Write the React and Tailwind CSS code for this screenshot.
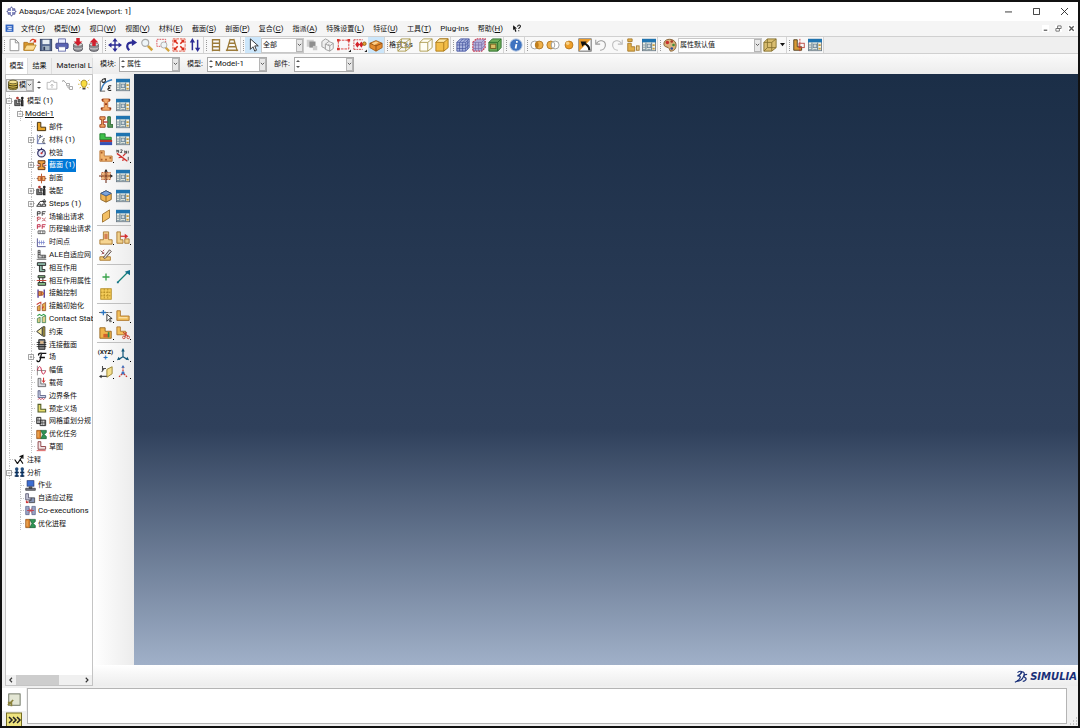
import React, { useState } from 'react';

const gold = '#e3b04a';
const dark = '#4a3a1a';

// All drawings share a 16x16 grid
const icons = {
    app: <><path d="M8 1l2 3h3v3l2 1-2 1v3h-3l-2 3-2-3H3V9L1 8l2-1V4h3z" fill="#8a8fc4" stroke="#4b4f8f" /><path d="M3 8h10M8 3v10" stroke="#fff" strokeWidth="1.5" /></>,
    doc: <><rect x="1" y="1" width="14" height="13" fill="#2f62c0" /><path d="M4 5h8M6 8h6M4 11h8" stroke="#fff" strokeWidth="1.6" /></>,
    fresh: <path d="M3.5 1.5h6l4 4v9h-10zM9.5 1.5v4h4" fill="#fff" stroke="#888" />,
    open: <><path d="M1 14V5h4l1 1h6v8z" fill="#d9972c" stroke="#a86d18" /><path d="M1 14l3-6h11l-3 6z" fill="#fbdc94" stroke="#b78428" /><path d="M8 4c2-3 4-3 6-1" fill="none" stroke="#d93a22" strokeWidth="1.5" /><path d="M15 1v4h-4z" fill="#d93a22" /></>,
    save: <><rect x="1.5" y="1.5" width="13" height="13" fill="#52668f" stroke="#2f3c5c" /><rect x="4" y="2" width="8" height="5" fill="#e7eef4" /><rect x="4" y="9" width="8" height="5" fill="#a3b4c3" /><path d="M6 10v4" stroke="#2f3c5c" strokeWidth="2" /></>,
    print: <><path d="M4 6V1h8v5" fill="#e9ecff" stroke="#6068a8" /><rect x="1" y="6" width="14" height="6" rx="1" fill="#5a63b4" stroke="#373e80" /><rect x="4" y="10" width="8" height="5" fill="#fff" stroke="#6068a8" /></>,
    dbDown: <><path d="M3 7v6c0 3 10 3 10 0V7z" fill="#8d8d93" stroke="#55555c" /><ellipse cx="8" cy="7.500" rx="5" ry="2" fill="#d6d6d6" stroke="#777" /><path d="M3 11c1 2 9 2 10 0" fill="none" stroke="#ddd" /><path d="M6 0h4v4h3L8 9 3 4h3z" fill="#cf1f2d" /></>,
    dbUp: <><path d="M3 7v6c0 3 10 3 10 0V7z" fill="#8d8d93" stroke="#55555c" /><ellipse cx="8" cy="7.500" rx="5" ry="2" fill="#d6d6d6" stroke="#777" /><path d="M3 11c1 2 9 2 10 0" fill="none" stroke="#ddd" /><path d="M6 9h4V5h3L8 0 3 5h3z" fill="#cf1f2d" /></>,
    pan: <><path d="M8 2v12M2 8h12" stroke="#2c2c94" strokeWidth="1.6" /><path d="M8 0l3 4H5zM8 16l3-4H5zM0 8l4-3v6zM16 8l-4-3v6z" fill="#2c2c94" /></>,
    spin: <><path d="M6 14C2 10 3 5 10 5" fill="none" stroke="#2c2c94" strokeWidth="2.4" /><path d="M9 1l6 4-6 4z" fill="#2c2c94" /></>,
    zoom: <><path d="M9 9l5 5" stroke="#d1a33c" strokeWidth="3" /><circle cx="6" cy="5.500" r="4" fill="#eef5f8" stroke="#a8a8a8" strokeWidth="1.3" /></>,
    zoomBox: <><rect x="1" y="1.500" width="10" height="8" fill="none" stroke="#d8434b" strokeDasharray="2 1" /><path d="M11 11l4 4" stroke="#d1a33c" strokeWidth="2.500" /><circle cx="9" cy="8" r="3.500" fill="#eef5f8" stroke="#a8a8a8" /></>,
    fit: <><rect x="1" y="1" width="14" height="14" fill="#fff6f3" stroke="#e04b38" strokeDasharray="3 1" /><path d="M3 3l3.500 3.500M13 3L9.500 6.500M3 13l3.500-3.500M13 13L9.500 9.500" stroke="#d92d1b" strokeWidth="1.700" /><path d="M2 2h4L2 6zM14 2h-4l4 4zM2 14h4l-4-4zM14 14h-4l4-4z" fill="#d92d1b" /></>,
    upDown: <><path d="M5 3v11M11 2v11" stroke="#2c2c94" strokeWidth="1.700" /><path d="M5 0l3 5H2zM11 16l3-5H8z" fill="#2c2c94" /></>,
    ladder: <path d="M4 1v14M12 1v14M4 2h8M4 6h8M4 10h8M4 14h8" fill="none" stroke="#9c7b3a" strokeWidth="1.500" />,
    persp: <path d="M6 1L2 15M10 1l4 14M5 2h6M4 6h8M3 10h10M1 14h14" fill="none" stroke="#9c7b3a" strokeWidth="1.500" />,
    cursor: <path d="M5 1v12l3-3 2 5 2-1-2-5h4z" fill="#fff" stroke="#222" />,
    squares: <><rect x="2" y="2" width="8" height="8" fill="#d0d0d0" /><rect x="5" y="4" width="7" height="7" fill="#8e8e8e" /><rect x="9" y="9" width="5" height="5" fill="#ccc" /></>,
    stack: <><path d="M1 4l4-3 4 2v6l-4 3-4-2z" fill="#eee" stroke="#999" /><path d="M5 7l4-3 5 2v6l-4 3-5-2zM5 7l5 2 4-3M10 9v6" fill="#f4f4f4" stroke="#999" /></>,
    pickBox: <><rect x="1.500" y="2.500" width="12" height="10" fill="none" stroke="#d8342f" strokeDasharray="3 1" /><path d="M0 1h3v3H0zM12 1h3v3h-3zM0 11h3v3H0z" fill="#d8342f" /><path d="M13 16h3v-3z" fill="#222" /></>,
    pickItems: <><path d="M1 2h10M1 13h10M1 2v11" fill="none" stroke="#c33" strokeDasharray="2 1" /><path d="M5 4l2.500 3.500L5 11 2.500 7.500zM9.500 4L12 7.500 9.500 11 7 7.500z" fill="#d3222a" /><circle cx="13" cy="6.500" r="2" fill="#e8a534" stroke="#8a5a1a" /><path d="M13 16h3v-3z" fill="#222" /></>,
    solid: <><path d="M1 6l7-3 7 3v5l-7 4-7-4z" fill="#e48b2e" stroke="#a35e17" /><path d="M1 6l7 3 7-3M8 9v6" fill="none" stroke="#8c4d12" /><path d="M3 6l5-2 3 1-5 3z" fill="#fbd08b" /></>,
    wire: <path d="M1 5h9v10H1zM1 5l4-4h10l-5 4M15 1v10l-5 4M5 1v10h10M1 15l4-4" fill="none" stroke="#a9984a" />,
    hidden: <path d="M1 5h9v10H1zM1 5l4-4h10l-5 4M15 1v10l-5 4" fill="#fffef4" stroke="#a9984a" />,
    shaded: <><path d="M1 5l4-4h10v10l-5 4H1z" fill="#f2bd48" stroke="#a97818" /><path d="M10 5h-9l4-4h10z" fill="#fde7a6" stroke="#a97818" /><path d="M10 5v10" stroke="#a97818" /></>,
    meshBlue: <><path d="M1 5l4-4h10v10l-4 4H1z" fill="#a9b4de" stroke="#4453a0" /><path d="M1 5h10v10M11 5l4-4M4 5v10M7.500 5v10M1 8h10l4-4M1 12h10l4-4M4 5l4-4M8 5l4-4M13 3v10" fill="none" stroke="#4858a0" strokeWidth=".8" /></>,
    meshRed: <><path d="M1 5l4-4h10v10l-4 4H1z" fill="#b5b2dc" stroke="#d04355" strokeWidth="1.500" strokeDasharray="2 1" /><path d="M1 5h10v10M11 5l4-4M4 5v10M7.500 5v10M1 8h10l4-4M1 12h10l4-4" fill="none" stroke="#7c6fa8" strokeWidth=".8" /></>,
    meshGreen: <><path d="M1 5l4-4h10v10l-4 4H1z" fill="#6fae5a" stroke="#2a6a2a" /><path d="M1 5h10v10M11 5l4-4" fill="none" stroke="#2a6a2a" /><rect x="3" y="7" width="6" height="5" fill="#d9bf66" stroke="#735a1a" /></>,
    info: <><circle cx="8" cy="8" r="7" fill="#3f73c0" stroke="#a9bedc" /><path d="M9 3.500v2M8.500 7l-1 5" stroke="#fff" strokeWidth="2" /></>,
    ring1: <><circle cx="5.500" cy="8" r="4.500" fill="#fff" stroke="#999" /><circle cx="10.500" cy="8" r="4.500" fill="#f0b04a" stroke="#aa7424" /><path d="M8 4a5 5 0 010 8 5 5 0 010-8" fill="#c17e1c" /></>,
    ring2: <><circle cx="5.500" cy="8" r="4.500" fill="#f0b04a" stroke="#aa7424" /><circle cx="10.500" cy="8" r="4.500" fill="#fff" stroke="#999" /><path d="M8 4a5 5 0 010 8 5 5 0 010-8" fill="#fff" stroke="#999" /></>,
    ring3: <><circle cx="8" cy="8" r="4.500" fill="#ee9f2a" stroke="#b4741b" /><circle cx="6.500" cy="6" r="2" fill="#f9d389" /></>,
    swap: <><rect x="1" y="1" width="14" height="14" fill="#fff" stroke="#555" /><path d="M1 1h14L1 15z" fill="#e89a2c" /><path d="M13 14c0-5-3-7-7-8" fill="none" stroke="#111" strokeWidth="2.500" /><path d="M3 4h7l-5 6z" fill="#111" /></>,
    undo: <path d="M3 6c3-5 10-3 10 2 0 4-3 6-6 6M2 2v5h5" fill="none" stroke="#999" strokeWidth="1.200" />,
    redo: <path d="M13 6C10 1 3 3 3 8c0 4 3 6 6 6M14 2v5H9" fill="none" stroke="#bbb" strokeWidth="1.200" />,
    parts: <><path d="M2 1h5v3H2zM2 6h4v4h4v5H2z" fill={gold} stroke="#a3782c" /><rect x="12" y="9" width="3" height="5" fill="#e9cf93" stroke="#a3782c" /></>,
    table: <><rect x="0.500" y="1.500" width="15" height="13" fill="#f2f3e6" stroke="#6b7a86" /><rect x="0" y="1" width="16" height="4" fill="#1f74b0" /><path d="M1 8h3M1 10.500h3M1 13h3M6 13h4" stroke="#6d8798" /><rect x="6" y="7" width="4" height="4" fill="#cfd8dc" stroke="#6d8798" /><path d="M4.500 5v9M11 5v9" stroke="#6b8799" strokeWidth="1.300" /><path d="M12 7h2.500v2H12zM12 11h2.500v2H12z" fill="#c79a3a" /></>,
    palette: <><path d="M1 7c0-8 14-7 14 1 0 5-3 7-6 7-2 0-1-3-3-4S1 10 1 7z" fill="#d9b27c" stroke="#7c5527" /><circle cx="5" cy="5" r="2" fill="#c9302c" /><circle cx="10" cy="4" r="1.500" fill="#a53a28" /><circle cx="12" cy="8" r="1.500" fill="#3c8c3c" /><circle cx="10" cy="12" r="1.500" fill="#2b4a9b" /></>,
    crate: <><path d="M1 5l4-4h10v10l-5 4H1z" fill="#d9bd70" /><path d="M1 5h9v10H1zM1 5l4-4h10l-5 4M15 1v10l-5 4M5 1v10h10M1 15l4-4" fill="none" stroke="#85702f" /></>,
    partCut: <><path d="M2 2h4v8h5v4H2z" fill="#d99b35" stroke={dark} /><rect x="8" y="6" width="6" height="5" fill="none" stroke="#b8433a" /><path d="M9 1v14" stroke="#c9302c" strokeDasharray="2 1" /></>,
    db: <><path d="M2 4v8c0 3 12 3 12 0V4" fill="#d9bd4f" stroke="#4a4212" /><ellipse cx="8" cy="4" rx="6" ry="2.500" fill="#f3e08f" stroke="#4a4212" /><path d="M2 7c0 3 12 3 12 0M2 10c0 3 12 3 12 0" fill="none" stroke="#4a4212" strokeWidth="1.500" /></>,
    upFolder: <path d="M1.500 4.500h4l1-2h4v2h4v9h-13zM8 12V7M6 9l2-2 2 2" fill="none" stroke="#aaa" />,
    tree2: <path d="M2 2l4 4M3 2H1v2M6 6h4v3H6zM8 9v3h2M10 10h4v4h-4z" fill="none" stroke="#aaa" strokeWidth="1.300" />,
    bulb: <><path d="M4 6c0-6 8-6 8 0 0 3-2 3-2 5H6c0-2-2-2-2-5z" fill="#f9dc3f" stroke="#8d7210" /><path d="M6 12h4v2H6z" fill="#444" /><path d="M1 1l2 2M15 1l-2 2M0 7h2M14 7h2M2 12l2-1M14 12l-2-1" stroke="#c7a31d" /></>,
    modelSet: <><path d="M1 14V6h3v5h5v3zM6 9V5h3v4z" fill="#777" stroke="#222" /><path d="M11 14V7l1-3 1 3v7z" fill="#555" stroke="#222" strokeWidth="1.500" /><circle cx="5" cy="3" r="2" fill="#b43a32" /><circle cx="12" cy="3" r="2" fill="#222" /></>,
    part: <path d="M2 2h5v7h7v5H2z" fill="#e7a428" stroke="#4a3410" strokeWidth="1.400" />,
    material: <><path d="M2 1v13h12M2 14C4 8 5 4 10 3" fill="none" stroke="#6573aa" strokeWidth="1.300" /><path d="M13 7c-4-1-3 3-1 3-4 0-3 4 1 3M7 2C3 2 4 6 6 5s1-3 0-3" fill="none" stroke="#333" strokeWidth="1.200" /></>,
    gauge: <><circle cx="8" cy="9" r="5.500" fill="#e9e9f9" stroke="#353568" strokeWidth="1.800" /><path d="M8 9l3-4M2 3l3 2M8 1v3" stroke="#353568" strokeWidth="1.500" /><circle cx="8" cy="9" r="1.500" fill="#d33" /></>,
    section: <><path d="M3 1h10v4h-3v5h3v4H3v-4h3V5H3z" fill="#f0a040" stroke="#5b2f12" strokeWidth="1.300" /><path d="M1 7.500h4M11 7.500h4" stroke="#c33c25" strokeWidth="1.500" /></>,
    profile: <><path d="M1 8h14" stroke="#333" /><path d="M3 5h4v6H3zM9 5h4v6H9zM8 1v14" fill="#f2b36a" stroke="#b34d20" strokeWidth="1.300" /></>,
    steps: <path d="M1 12l5-7h8M1 12h6v-3H3M7 12h2M10 4l2-2 2 3-2 3zM9 9h5v3H9z" fill="none" stroke="#222" strokeWidth="1.300" />,
    fieldOut: <><path d="M2 1v6M2 1h4v3H2M9 1v6M9 1h5M9 4h4" fill="none" stroke="#333" strokeWidth="1.300" /><path d="M2 9v6M2 9h4v3H2M9 10l5 5M14 10l-5 5" fill="none" stroke="#b8303a" strokeWidth="1.300" strokeDasharray="3 1" /></>,
    histOut: <><path d="M2 1v6M2 1h4v3H2M9 1v6M9 1h5M9 4h4" fill="none" stroke="#c2304c" strokeWidth="1.400" /><path d="M3 10h10v4H3zM6 10v4M10 10v4" fill="none" stroke="#333" /></>,
    timePts: <><path d="M2 2v12h12" fill="none" stroke="#4b4b8c" strokeWidth="1.300" /><path d="M3 8h10M5 5v6M8 5v6M11 5v6" stroke="#7580cc" /></>,
    ale: <><path d="M3 2v11h11V9H6V2z" fill="#ccc" stroke="#333" /><path d="M3 5h3M3 8h3M9 9v4M12 9v4M1 15h14" stroke="#333" /></>,
    inter: <><path d="M2 1h12v4H2zM5 5v9h8v-3H9V5" fill="#93bfae" stroke="#222" strokeWidth="1.300" /></>,
    interProp: <><path d="M3 1h10v3H3zM3 11h11v4H3zM5 4v7M10 4v7" fill="#8cc58c" stroke="#222" strokeWidth="1.300" /><path d="M1 8h14" stroke="#c8463a" strokeWidth="1.500" /></>,
    contact: <><path d="M3 2v12M12 2v12" stroke="#59409a" strokeWidth="2" /><path d="M4 5h3v6H4zM8 5c4 1 4 5 0 6z" fill="#eda33a" stroke="#93321e" /></>,
    contactInit: <><path d="M2 14V8l4-2v8zM9 14V5l5-3v12z" fill="#e7b34d" stroke="#8a3b20" /><path d="M1 5l5-3M7 1v4M11 8l-2 3" stroke="#c7302b" strokeWidth="1.500" /></>,
    contactStab: <><path d="M2 14V8l4-2v8zM9 14V6l5-2v10z" fill="#e0cf8a" stroke="#287444" /><path d="M2 4l3-2 3 2 3-2 3 2" fill="none" stroke="#2e9c4a" strokeWidth="1.500" /></>,
    constraint: <><path d="M1 8l8-6v12z" fill="#f6e9a0" stroke="#222" strokeWidth="1.300" /><path d="M10 1h3v14h-3z" fill="#bba745" stroke="#222" /></>,
    connect: <><path d="M4 1h9v14H4z" fill="#888" stroke="#222" strokeWidth="1.300" /><path d="M1 5h14M1 8h14M1 11h14" stroke="#222" strokeWidth="1.200" /><path d="M6 3h5v4H6z" fill="#d9b68a" /></>,
    field: <path d="M15 2H9C6 2 8 13 4 14c-2 0-3-1-2-2M5 8h8M9 2C5 1 3 3 4 5" fill="none" stroke="#111" strokeWidth="1.900" />,
    amp: <><path d="M2 1v14M2 8h12" stroke="#666" /><path d="M2 8c2-8 5-7 6 0s4 7 6 0" fill="none" stroke="#c7284b" strokeWidth="1.400" /></>,
    load: <><path d="M3 2v12h11v-4H7V2z" fill="#d9d9df" stroke="#444" /><path d="M11 1v6M9 5l2 3 2-3" fill="none" stroke="#c22" strokeWidth="1.400" /></>,
    bc: <><path d="M3 1v10h11V8H6V1z" fill="#cfd5ea" stroke="#333a66" /><path d="M3 14l2-2 2 2 2-2 2 2 2-2" fill="none" stroke="#c8344a" strokeWidth="1.300" /></>,
    predef: <path d="M3 2v11h11V9H7V2z" fill="#e7dc6c" stroke="#56602a" strokeWidth="1.600" />,
    remesh: <><path d="M1 2h6v9H1zM6 6h8v8H6z" fill="#eee" stroke="#222" strokeWidth="1.300" /><path d="M3 2v9M1 6h5M9 6v8M12 6v8M6 10h8" stroke="#333" /></>,
    opt: <><path d="M1 2h6v12H1z" fill="#df852c" stroke="#8d4b10" /><path d="M3 4v8" stroke="#f6d18a" /><path d="M7 2h8v3l-3 3 3 3v3H7l3-6z" fill="#2f9454" stroke="#165c30" /></>,
    sketch: <><path d="M3 1v11h11V8H7V1z" fill="#f3e5e5" stroke="#883a3e" strokeWidth="1.300" /><path d="M1 14h13" stroke="#c22" /></>,
    note: <path d="M1 8l4 6M5 14l8-12M8 4l5-2v5M9 8l4 6" fill="none" stroke="#111" strokeWidth="1.600" />,
    analysis: <><path d="M4 2v12M12 2v12" stroke="#174b82" strokeWidth="3" /><circle cx="4" cy="3" r="2.500" fill="#244d7c" /><circle cx="12" cy="3" r="2.500" fill="#244d7c" /><path d="M1 8h6M9 8h6M1 13h6M9 13h6" stroke="#122c50" strokeWidth="2" /></>,
    job: <><rect x="3" y="1" width="10" height="8" fill="#3d6ed1" stroke="#24346c" /><path d="M6 10h4v2H6zM1 12h14v3H1z" fill="#778" stroke="#333" /></>,
    adapt: <><path d="M1 1h4v6h4v3H1z" fill="#c6c6d6" stroke="#3b3b55" /><path d="M9 7h5v7H6v-3h3z" fill="#8896b8" stroke="#333" /><path d="M5 12l-3 2M2 11v3h3" stroke="#c22" fill="none" strokeWidth="1.400" /></>,
    coexec: <><path d="M1 2h5v12H1zM10 2h5v12h-5z" fill="#9aa4c5" stroke="#555f86" /><path d="M6 5l4 6M10 5l-4 6M3 8h10" stroke="#c33a45" strokeWidth="1.300" /></>,
    curve: <><path d="M2 15C4 9 5 4 15 2" fill="none" stroke="#3c7fc0" strokeWidth="1.600" /><path d="M1.500 3v12M1 15h6" stroke="#555" /><path d="M8 1C3 0 2 5 5 5s3-4 1-4M14 9c-4-1-4 2-1 2.500-4 0-4 3.500 1 2.500" fill="none" stroke="#222" strokeWidth="1.200" /></>,
    beam: <><path d="M4 1h8v3h-2v7h3v3H3v-3h3V4H4z" fill="#f2a765" stroke="#bd6b38" /><path d="M3 1h2v2H3zM11 1h2v2h-2zM2 11h2v2H2zM12 11h2v2h-2zM7 6h2v2H7z" fill="#8e2f13" /></>,
    beamAssign: <><path d="M1 2h6v3H5v6h2v3H1v-3h2V5H1z" fill="#f2a765" stroke="#9c3f18" /><path d="M10 2h3v9h3v3h-6z" fill="#5e9c5c" stroke="#205e27" /><path d="M5 8h5" stroke="#b33" strokeWidth="1.500" /></>,
    composite: <><path d="M1 2h6v4h7v3H1z" fill="#3fc04a" stroke="#1f7a2b" /><path d="M1 9h14v2.500H1z" fill="#b5362e" /><path d="M1 11.500h14V15H1z" fill="#3550b5" /></>,
    skin: <><path d="M1 2h5v6h9v6H1z" fill="#f1b46e" stroke="#b9773a" /><path d="M2 3h2v2H2zM2 11h2v2H2zM7 11h2v2H7zM12 9h2v2h-2z" fill="#a85a28" /></>,
    normals: <><path d="M1 5l12 9" stroke="#d0312d" strokeWidth="1.500" /><path d="M3 10l4-1M7 13l3-1M8 8l3-3" stroke="#d0312d" strokeWidth="1.300" /><path d="M1 4V1l2 3V1M5 1h2v1L5 4h2M10 5V2l2 3V2M14 2v3M14 9v4" fill="none" stroke="#333" strokeWidth=".9" /></>,
    profileBig: <><rect x="3" y="4" width="10" height="8" fill="#f4c28a" stroke="#b0552a" strokeDasharray="2 1" /><path d="M0 8h14M8 2v14" stroke="#6c2b15" strokeWidth="1.200" /><path d="M6 5v6M10 5v6" stroke="#c87848" /><path d="M13 6l3 2-3 2zM6 3l2-3 2 3z" fill="#222" /></>,
    cubeTop: <><path d="M2 5l6-3 6 3v7l-6 3-6-3z" fill="#f0b455" stroke="#886022" /><path d="M2 5l6-3 6 3-6 3z" fill="#7ca4dc" stroke="#2f538e" /><path d="M8 8v7" stroke="#886022" /></>,
    shell: <path d="M4 6l8-5v9l-8 5z" fill="#f3bf64" stroke="#9c702c" />,
    partUp: <><path d="M5 1h6v9h4v5H1v-5h4z" fill="#f6d592" stroke="#a7762b" /><path d="M7 3v6M9 3v6" stroke="#c75b3a" strokeWidth="1.300" /></>,
    partMove: <><path d="M1 1h4v9h3v4H1zM10 9h5v5h-5z" fill="#f0d08c" stroke="#a7762b" /><path d="M5 6h6" stroke="#d32f2f" strokeWidth="1.400" /><path d="M10 3l4 3-4 3z" fill="#d32f2f" /></>,
    partEdit: <><path d="M1 10h12v4H1z" fill="#f0c671" stroke="#a7762b" /><path d="M5 11l7-9 2 2-7 8zM2 3l4 4" stroke="#55413a" fill="#ddd" /><path d="M4 4l2-2M3 7l3-2" stroke="#b33a4a" /></>,
    plus: <path d="M8 4v8M4 8h8" stroke="#37a24a" strokeWidth="1.500" />,
    line: <><path d="M2 14L14 2" stroke="#137f78" strokeWidth="1.500" /><path d="M1 13h2v2H1zM16 0v6l-6-4z" fill="#126f8a" /></>,
    grid: <><rect x="2" y="2" width="12" height="12" fill="#f3cb58" stroke="#b28a22" /><path d="M6 2v12M10 2v12M2 6h12M2 10h12" stroke="#b28a22" strokeDasharray="2 1" /></>,
    datum: <><path d="M0 4h16" stroke="#555" strokeDasharray="3 1" /><path d="M5 1v6M2 4h6" stroke="#2b75c2" strokeWidth="1.500" /><path d="M9 6v8l2-2 2 3 1-1-2-3h3z" fill="#fff" stroke="#222" /></>,
    partFlat: <><path d="M1 2h4v6h10v5H1z" fill="#f3c05b" stroke="#ac722a" /><path d="M3 10h10" stroke="#fff0cd" /></>,
    partHole: <><path d="M1 2h6v4h7v8H1z" fill="#f0b44a" stroke="#95631b" /><path d="M5 9h6v4H5z" fill="#d4602e" /><path d="M11 7v6" stroke="#2f8c4c" strokeWidth="2" /></>,
    partTrim: <><path d="M1 1h4v5h6v4H1z" fill="#f3c05b" stroke="#a9702a" /><path d="M8 7l6 5M12 7l-2 6" stroke="#c84332" strokeWidth="1.300" /><circle cx="9" cy="13" r="1.500" fill="none" stroke="#c84332" /><circle cx="14" cy="13" r="1.500" fill="none" stroke="#c84332" /></>,
    axes: <><path d="M8 2v8l-5 3M8 10l5 3" fill="none" stroke="#12597b" strokeWidth="1.400" /><path d="M8 0l2 4H6zM1 14l2-4 2 3zM15 14l-2-4-2 3z" fill="#12597b" /></>,
    planes: <><path d="M9 5l6-3v8l-6 4z" fill="#f4df8d" stroke="#957f28" /><path d="M4 1v6M4 4h4M1 13h8M3 8l3-4" stroke="#4e4e4e" strokeWidth="1.200" /><path d="M0 13l3-2v4z" fill="#333" /></>,
    axesRed: <><path d="M8 2v6M7 10l-4 4M9 10l4 4" stroke="#cc3a31" strokeWidth="1.500" strokeDasharray="2 1" /><path d="M8 0l2 3H6z" fill="#3c70c0" /><circle cx="8" cy="9" r="1.800" fill="#3c70c0" /></>,
    message: <><rect x="2" y="1" width="13" height="13" fill="#e3e6d4" stroke="#606855" /><path d="M1 14l6-6M1 11h4v4" fill="none" stroke="#8a813a" strokeWidth="2" /></>,
    cli: <><rect x="0.500" y="1" width="15" height="14" fill="#eee37e" stroke="#746c21" /><path d="M3 5l3 3-3 3M7 5l3 3-3 3M11 5l3 3-3 3" fill="none" stroke="#222" strokeWidth="1.500" /></>,
    help: <><path d="M2 2v9l2-2 2 5 2-1-2-5h3z" fill="#111" /><path d="M10 5c0-4 5-4 5-1s-3 2-3 5M12 11v2" fill="none" stroke="#111" strokeWidth="1.800" /></>,
    ds: <path d="M4 3c4-3 7-1 3 2l-3 2c5-1 4 4-3 7M7 4c3-3 6-2 4 3-1 3-4 6-8 6M15 5c-5 0-4 3-2 4s0 4-3 4" fill="none" stroke="#182f78" strokeWidth="1.400" />,
};

const Icon = ({ name, className = 'size-[14px]' }) => (
    <svg viewBox="0 0 16 16" className={`shrink-0 ${className}`} aria-hidden="true">{icons[name]}</svg>
);

// Chinese glyphs are set one pixel smaller than the Latin ones around them
const Mixed = ({ text }) => text.split(/([\u4e00-\u9fff]+)/).filter(Boolean).map((t, i) => (
    /[\u4e00-\u9fff]/.test(t) ? <span key={i} className="text-[7px]">{t}</span> : <span key={i}>{t}</span>
));

const menus = [['文件', 'F'], ['模型', 'M'], ['视口', 'W'], ['视图', 'V'], ['材料', 'E'], ['截面', 'S'], ['剖面', 'P'], ['复合', 'C'], ['指派', 'A'], ['特殊设置', 'L'], ['特征', 'U'], ['工具', 'T'], ['Plug-ins'], ['帮助', 'H']];

// depth, expander, icon, label, guide line for the root column
const tree = [
    [0, '-', 'modelSet', '模型 (1)'],
    [1, '-', null, 'Model-1', true],
    [2, '', 'part', '部件', true],
    [2, '+', 'material', '材料 (1)', true],
    [2, '', 'gauge', '校验', true],
    [2, '+', 'section', '截面 (1)', true],
    [2, '', 'profile', '剖面', true],
    [2, '+', 'modelSet', '装配', true],
    [2, '+', 'steps', 'Steps (1)', true],
    [2, '', 'fieldOut', '场输出请求', true],
    [2, '', 'histOut', '历程输出请求', true],
    [2, '', 'timePts', '时间点', true],
    [2, '', 'ale', 'ALE自适应网', true],
    [2, '', 'inter', '相互作用', true],
    [2, '', 'interProp', '相互作用属性', true],
    [2, '', 'contact', '接触控制', true],
    [2, '', 'contactInit', '接触初始化', true],
    [2, '', 'contactStab', 'Contact Stab', true],
    [2, '', 'constraint', '约束', true],
    [2, '', 'connect', '连接截面', true],
    [2, '+', 'field', '场', true],
    [2, '', 'amp', '幅值', true],
    [2, '', 'load', '载荷', true],
    [2, '', 'bc', '边界条件', true],
    [2, '', 'predef', '预定义场', true],
    [2, '', 'remesh', '网格重划分规', true],
    [2, '', 'opt', '优化任务', true],
    [2, '', 'sketch', '草图', true],
    [0, '', 'note', '注释'],
    [0, '-', 'analysis', '分析'],
    [1, '', 'job', '作业'],
    [1, '', 'adapt', '自适应过程'],
    [1, '', 'coexec', 'Co-executions'],
    [1, '', 'opt', '优化进程'],
];

const toolbox = [
    [[['curve', 'table']], [['beam', 'table'], ['beamAssign', 'table'], ['composite', 'table'], ['skin', 'normals', true]], [['profileBig', 'table']], [['cubeTop', 'table']], [['shell', 'table']]],
    [[['partUp', 'partMove', true], ['partEdit']]],
    [[['plus', 'line'], ['grid']]],
    [[['datum', 'partFlat', true], ['partHole', 'partTrim', true]]],
    [[['xyz', 'axes', true], ['planes', 'axesRed', true]]],
];

const Grip = ({ className = 'w-[5px]' }) => (
    <span className={`flex h-full shrink-0 items-center justify-center border-l border-[#d4d4d4] ${className}`}>
        <span className="h-[11px] border-l border-dotted border-[#999]" />
    </span>
);

const Tools = ({ names, active }) => names.split(' ').map((n) => (
    <button key={n} aria-label={n} className={`flex h-full w-4 shrink-0 items-center justify-center ${n === active ? 'bg-[#cce6fa]' : ''}`}>
        <Icon name={n} />
    </button>
));

const Chevron = () => (
    <span className="pointer-events-none absolute inset-y-0 right-0 flex w-[7px] items-center justify-center border border-[#b5b5b5] bg-[#e8e8e8]">
        <svg viewBox="0 0 6 4" className="w-[5px]"><path d="M1 1l2 2 2-2" fill="none" stroke="#444" /></svg>
    </span>
);

const Spinner = () => (
    <svg viewBox="0 0 6 12" className="h-3 w-[6px] shrink-0" aria-hidden="true"><path d="M1 4l2-2 2 2zM1 8l2 2 2-2z" fill="#555" /></svg>
);

const Combo = ({ label, value, className, size = 'text-[7px]' }) => (
    <span className={`relative flex shrink-0 items-center border border-[#aaa] bg-white ${className}`}>
        <Spinner />
        <select aria-label={label} className={`h-full min-w-0 flex-1 appearance-none bg-transparent pl-px outline-none ${size}`}>
            <option>{value}</option>
        </select>
        <Chevron />
    </span>
);

const Plain = ({ label, value, className }) => (
    <span className={`relative flex h-[15px] shrink-0 border border-[#c8c8c8] bg-white ${className}`}>
        <select aria-label={label} className="min-w-0 flex-1 appearance-none bg-transparent pl-px text-[7px] outline-none">
            <option>{value}</option>
        </select>
        <Chevron />
    </span>
);

const Toolbar = () => (
    <div className="flex h-[18px] shrink-0 items-center border-y border-[#d0d0d0] bg-[#efefef]">
        <div className="flex h-full items-center border-r border-[#d4d4d4] bg-[#f8f8f8]">
            <Grip className="w-1" />
            <Tools names="fresh open save print dbDown dbUp" />
            <Grip />
            <Tools names="pan spin zoom zoomBox fit upDown" />
            <Grip />
            <Tools names="ladder persp" />
            <Grip />
            <Tools names="cursor" active="cursor" />
            <Plain label="选择过滤" value="全部" className="w-[43px]" />
            <Tools names="squares stack pickBox pickItems solid" active="solid" />
            <Grip />
            <span className="relative flex w-[29px] items-center">
                <Mixed text="格式%s" />
                <span className="absolute left-2"><Icon name="wire" /></span>
            </span>
            <Tools names="hidden shaded" />
            <Grip />
            <Tools names="meshBlue meshRed meshGreen" />
            <Grip />
            <Tools names="info" />
            <Grip />
            <Tools names="ring1 ring2 ring3 swap undo redo parts table" />
            <Grip />
            <Tools names="palette" />
            <Plain label="颜色代码" value="属性默认值" className="w-[84px]" />
            <Tools names="crate" />
            <button aria-label="更多" className="flex w-2 items-center justify-center">
                <svg viewBox="0 0 6 4" className="w-[5px]"><path d="M0 0h6L3 4z" fill="#111" /></svg>
            </button>
            <Grip />
            <Tools names="partCut table" />
        </div>
    </div>
);

const Expander = ({ sign }) => (
    <span className="relative flex h-full w-2 shrink-0 items-center justify-center">
        <span className="absolute inset-y-0 left-1 border-l border-dotted border-[#c4c4c4]" />
        <span className="absolute left-1 w-1 border-t border-dotted border-[#c4c4c4]" />
        {sign && (
            <svg viewBox="0 0 7 7" className="relative size-[6px]">
                <path d={sign === '+' ? 'M.5.5h6v6h-6zM2 3.500h3M3.500 2v3' : 'M.5.5h6v6h-6zM2 3.500h3'} fill="#fff" stroke="#8a8a8a" />
            </svg>
        )}
    </span>
);

const ModelTree = () => {
    const [selected, setSelected] = useState('截面 (1)');

    return (
        <ul className="-ml-px flex h-[435px] shrink-0 flex-col">
            {tree.map(([depth, sign, icon, label, guide], i) => (
                <li key={i} className="flex min-h-0 flex-1 items-center whitespace-nowrap">
                    {depth > 0 && <span className={`ml-1 h-full w-[7px] shrink-0 border-dotted border-[#c4c4c4] ${guide ? 'border-l' : ''}`} />}
                    {depth > 1 && <span className="w-[11px] shrink-0" />}
                    <Expander sign={sign} />
                    {icon && <Icon name={icon} className="mx-px size-[11px]" />}
                    <button
                        onClick={() => setSelected(label)}
                        className={`flex h-[13px] items-center px-px ${selected === label ? 'bg-[#0078d7] text-white' : ''} ${depth === 1 && !icon ? 'underline' : ''}`}
                    >
                        <span><Mixed text={label} /></span>
                    </button>
                </li>
            ))}
        </ul>
    );
};

const Sidebar = () => (
    <aside className="flex w-[91px] shrink-0 flex-col pl-[3px] pt-1">
        <div className="flex h-4 shrink-0 items-center whitespace-nowrap border-r border-[#ddd]">
            <button className="h-full w-[23px] shrink-0 border-x border-[#ddd] bg-white"><Mixed text="模型" /></button>
            <button className="h-full w-6 shrink-0 border-r border-[#ddd] bg-[#f0f0f0]"><Mixed text="结果" /></button>
            <button className="h-full min-w-0 flex-1 bg-[#f0f0f0] text-right">Material L</button>
        </div>
        <div className="flex min-h-0 flex-1 flex-col border border-[#c4c4c4] bg-white">
            <div className="flex h-5 shrink-0 items-center">
                <span className="relative flex h-[13px] w-7 items-center border border-[#aaa] bg-[#e6e6e6]">
                    <Icon name="db" className="size-3" />
                    <select aria-label="模型数据库" className="w-2 appearance-none overflow-hidden bg-transparent text-[7px] outline-none"><option>模</option></select>
                    <Chevron />
                </span>
                <span className="flex flex-1 items-center justify-around">
                    <Spinner />
                    <Icon name="upFolder" className="size-3" />
                    <Icon name="tree2" className="size-3" />
                    <Icon name="bulb" className="size-3" />
                </span>
            </div>
            <div className="min-h-0 flex-1">
                <ModelTree />
            </div>
            <div className="flex h-[10px] shrink-0 items-center bg-[#f0f0f0]">
                <button aria-label="左移" className="flex w-[10px] justify-center">
                    <svg viewBox="0 0 6 8" className="h-[6px]"><path d="M4 1L1 4l3 3" fill="none" stroke="#333" strokeWidth="1.500" /></svg>
                </button>
                <span className="h-full w-[43px] bg-[#cdcdcd]" />
                <button aria-label="右移" className="ml-auto flex w-[10px] justify-center">
                    <svg viewBox="0 0 6 8" className="h-[6px]"><path d="M1 1l3 3-3 3" fill="none" stroke="#333" strokeWidth="1.500" /></svg>
                </button>
            </div>
        </div>
    </aside>
);

const Flyout = () => (
    <span className="absolute bottom-px right-0 size-px bg-black" />
);

const Toolbox = () => (
    <div className="w-[41px] shrink-0 bg-gradient-to-r from-white to-[#ececec] pl-1 pr-[3px] pt-[2px]">
        {toolbox.map((group, g) => (
            <div key={g} className={`flex flex-col gap-[3px] ${g > 0 ? 'mt-px border-t border-[#c0c0c0] pt-[3px]' : ''}`}>
                {group.map((block, b) => (
                    <div key={b}>
                        {block.map(([left, right, fly]) => (
                            <div key={left} className="flex h-[17px] items-center">
                                <button aria-label={left} className="relative flex h-full w-[17px] items-center justify-center">
                                    {left === 'xyz' ? (
                                        <span className="flex flex-col items-center text-[6px] font-bold leading-[6px]">(XYZ)<span className="text-[8px] text-[#2b75c2]">+</span></span>
                                    ) : <Icon name={left} />}
                                    {fly && <Flyout />}
                                </button>
                                {right && (
                                    <button aria-label={right} className="relative flex h-full w-[17px] items-center justify-center">
                                        <Icon name={right} />
                                        {fly && <Flyout />}
                                    </button>
                                )}
                            </div>
                        ))}
                    </div>
                ))}
            </div>
        ))}
    </div>
);

const App = () => (
    <div className="flex h-screen flex-col overflow-hidden border-2 border-[#111] bg-[#f0f0f0] font-['Roboto','Noto_Sans_CJK_SC',sans-serif] text-[8px] leading-[12px] text-[#111]">
        <header className="flex h-[19px] shrink-0 items-center bg-white pl-1">
            <Icon name="app" className="size-[11px]" />
            <h1 className="ml-[2px]">Abaqus/CAE 2024 [Viewport: 1]</h1>
            <div className="ml-auto flex">
                <button aria-label="最小化" className="flex w-7 justify-center"><svg viewBox="0 0 8 8" className="size-[7px]"><path d="M0 4.500h8" stroke="#222" /></svg></button>
                <button aria-label="最大化" className="flex w-7 justify-center"><svg viewBox="0 0 8 8" className="size-[7px]"><path d="M.5.5h7v7h-7z" fill="none" stroke="#222" /></svg></button>
                <button aria-label="关闭" className="flex w-7 justify-center"><svg viewBox="0 0 8 8" className="size-[7px]"><path d="M0 0l8 8M8 0L0 8" stroke="#222" /></svg></button>
            </div>
        </header>

        <nav className="flex h-[15px] shrink-0 items-center bg-[#f5f5f5] pl-[3px]">
            <Icon name="doc" className="size-[9px]" />
            <div className="ml-[7px] flex gap-[9px]">
                {menus.map(([name, key]) => (
                    <button key={name}>
                        <Mixed text={name} />{key && <>(<u>{key}</u>)</>}
                    </button>
                ))}
                <button aria-label="这是什么"><Icon name="help" className="size-[9px]" /></button>
            </div>
            <div className="ml-auto flex gap-[6px] pr-[3px]">
                <button aria-label="最小化视口" className="bg-white"><svg viewBox="0 0 8 8" className="size-[7px]"><path d="M2 6h4" stroke="#666" strokeWidth="1.500" /></svg></button>
                <button aria-label="还原视口" className="bg-white"><svg viewBox="0 0 8 8" className="size-[7px]"><path d="M3 1h4v3H3zM1 4h4v3H1z" fill="none" stroke="#666" /></svg></button>
                <button aria-label="关闭视口" className="bg-white"><svg viewBox="0 0 8 8" className="size-[7px]"><path d="M1.500 1.500l5 5M6.500 1.500l-5 5" stroke="#555" strokeWidth="1.500" /></svg></button>
            </div>
        </nav>

        <Toolbar />

        <div className="flex min-h-0 flex-1">
            <Sidebar />
            <main className="flex min-w-0 flex-1 flex-col">
                <div className="flex h-5 shrink-0 items-center bg-gradient-to-b from-[#fafafa] to-[#ececec] pl-[7px]">
                    <span className="w-[19px]"><Mixed text="模块:" /></span>
                    <Combo label="模块" value="属性" className="h-[15px] w-[61px]" />
                    <span className="ml-[7px] w-5"><Mixed text="模型:" /></span>
                    <Combo label="模型" value="Model-1" className="h-[15px] w-[60px]" size="text-[8px]" />
                    <span className="ml-[7px] w-5"><Mixed text="部件:" /></span>
                    <Combo label="部件" value="" className="h-[15px] w-[60px]" />
                </div>
                <div className="flex min-h-0 flex-1">
                    <Toolbox />
                    <section aria-label="Viewport: 1" className="flex-1 bg-[linear-gradient(#1b2e47,#2f405b_60%,#a0b0c8)]" />
                </div>
                <div className="flex h-[21px] shrink-0 items-center justify-end bg-gradient-to-b from-white to-[#ededed] pr-px pt-[3px] text-[#182f78]">
                    <Icon name="ds" className="size-[14px]" />
                    <span className="ml-[2px] font-['DejaVu_Sans',sans-serif] text-[10px] font-bold italic">SIMULIA</span>
                </div>
            </main>
        </div>

        <footer className="flex h-10 shrink-0 pt-[2px]">
            <div className="flex w-6 shrink-0 flex-col overflow-hidden">
                <button aria-label="消息区" className="flex h-[23px] shrink-0 items-center justify-center bg-white"><Icon name="message" /></button>
                <button aria-label="命令行接口" className="flex h-[18px] shrink-0 items-center justify-center"><Icon name="cli" className="size-4" /></button>
            </div>
            <textarea aria-label="消息" className="mb-[2px] ml-px min-w-0 flex-1 resize-none border border-[#b4b4b4] bg-white outline-none" />
            <span className="flex w-[11px] shrink-0 items-end justify-end">
                <svg viewBox="0 0 9 9" className="size-[9px]"><path d="M7 1h1M4 4h1M7 4h1M1 7h1M4 7h1M7 7h1" stroke="#999" /></svg>
            </span>
        </footer>
    </div>
);

export default App;
